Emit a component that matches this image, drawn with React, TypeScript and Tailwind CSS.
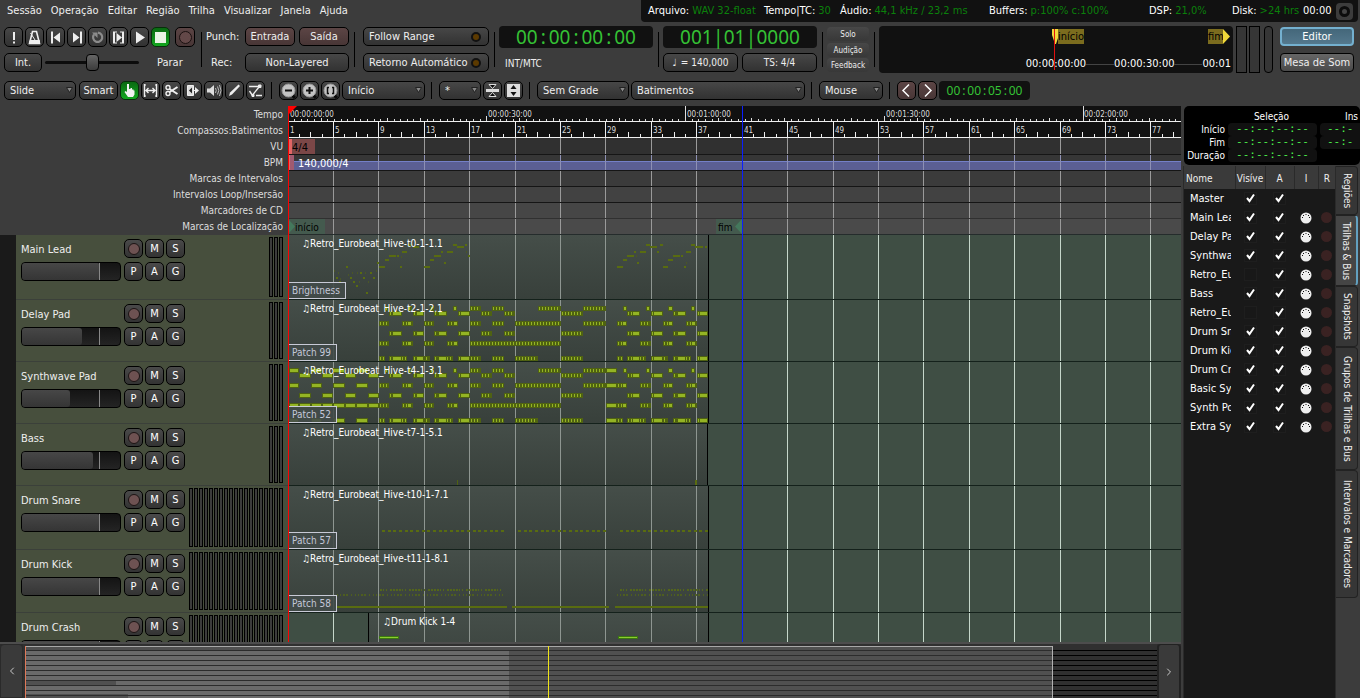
import React, { useState } from 'react';
import { ChevronLeft, ChevronRight } from 'lucide-react';
import clsx from 'clsx';

const GRID_LINES = Array.from({ length: 20 }, (_, i) => Math.floor(i * 45.42));

const MENUS = ['Sessão', 'Operação', 'Editar', 'Região', 'Trilha', 'Visualizar', 'Janela', 'Ajuda'];

const btn = 'border border-black rounded-[5px] bg-gradient-to-b from-[#474747] to-[#323232] flex items-center justify-center shrink-0 whitespace-nowrap';
const btnRed = 'border border-black rounded-[5px] bg-gradient-to-b from-[#5c4545] to-[#483636] flex items-center justify-center shrink-0';
const btnGreen = 'border border-[#06300a] rounded-[5px] bg-gradient-to-b from-[#0a6a12] to-[#12a81f] flex items-center justify-center shrink-0';

const Sep = () => <div className="w-px h-[35px] bg-black ml-[5px] mr-1 self-center shrink-0" />;
const ToolSep = () => <div className="w-px h-[17px] bg-black ml-[6px] mr-[7px] self-center shrink-0" />;

const Icon = ({ children }: { children: React.ReactNode }) => (
  <svg width="17" height="17" viewBox="0 0 17 17" fill="none" stroke="#eee" strokeWidth="1" aria-hidden="true">
    {children}
  </svg>
);

interface ClockProps {
  value: string;
  small?: boolean;
}

// digits keep their own width, separators get a full cell
const Clock = ({ value, small }: ClockProps) => (
  <span className={clsx('font-["Noto_Sans"] text-[#35c235] whitespace-nowrap', small ? 'text-[12px] leading-[18px]' : 'text-[19px] leading-[22px]')}>
    {value.split(/([:|])/).map((part, i) => (
      <span key={i} className={clsx('inline-block text-center', i % 2 === 1 && (small ? 'w-[7px]' : 'w-[11px]'))}>{part}</span>
    ))}
  </span>
);

interface StatusItemProps {
  label: string;
  value: string;
  className: string;
}

const StatusItem = ({ label, value, className }: StatusItemProps) => (
  <div className={clsx('shrink-0 flex gap-[3px] whitespace-nowrap', className)}>
    <span>{label}</span>
    <span className="text-[#0b800b]">{value}</span>
  </div>
);

const MenuBar = () => (
  <header className="flex h-[22px] items-center">
    <nav className="flex gap-[9px] pl-[7px] h-full items-center">
      {MENUS.map((m) => (
        <button key={m}>{m}</button>
      ))}
    </nav>
    <div className="ml-auto mr-[2px] h-full bg-[#111] rounded-b-[4px] pl-[7px] pr-[5px] flex items-center w-[717px] shrink-0 text-white">
      <StatusItem label="Arquivo:" value="WAV 32-float" className="w-[116px]" />
      <StatusItem label="Tempo|TC:" value="30" className="w-[76px]" />
      <StatusItem label="Áudio:" value="44,1 kHz / 23,2 ms" className="w-[149px]" />
      <StatusItem label="Buffers:" value="p:100% c:100%" className="w-[160px]" />
      <StatusItem label="DSP:" value="21,0%" className="w-[83px]" />
      <StatusItem label="Disk:" value=">24 hrs" className="w-[71px]" />
      <span className="w-[33px] shrink-0">00:00</span>
      <button aria-label="Erros" className="size-[17px] shrink-0 rounded-[4px] bg-[#3c3c3c] flex items-center justify-center">
        <span className="size-[11px] rounded-full border-[3px] border-[#0c0c0c] bg-[#444]" />
      </button>
    </div>
  </header>
);

const TRANSPORT = [
  { name: 'Pânico', icon: <path d="M8 3h2v8h-2zM8 12.500h2v2h-2z" fill="#eee" stroke="none" /> },
  { name: 'Metrônomo', icon: <><path d="M6.500 2.500h4l3 12h-10z" strokeWidth="1.600" /><path d="M4 11.500h9.500v3h-10zM9 11L4.500 4" fill="#eee" /></> },
  { name: 'Ir ao início', icon: <path d="M4 2.500h2v12h-2zM13 3.500v10l-6.500-5z" fill="#eee" stroke="none" /> },
  { name: 'Ir ao fim', icon: <path d="M12 2.500h2v12h-2zM5 3.500v10l6.500-5z" fill="#eee" stroke="none" /> },
  { name: 'Loop', icon: <><path d="M5 5.500a4.600 4.600 0 1 0 4-1.800" stroke="#8c8c8c" strokeWidth="2.200" /><path d="M3 3.500h5.500v5.500z" fill="#8c8c8c" stroke="none" /></> },
  { name: 'Tocar intervalo', icon: <><path d="M3 2.500h2v12H3zM12 2.500h2v12h-2zM6.500 4v9l5.500-4.500z" fill="#eee" stroke="none" /><path d="M5 3h2M5 14h2M10 3h2M10 14h2" /></> },
  { name: 'Tocar', icon: <path d="M5 2.500v12l9-6z" fill="#eee" stroke="none" /> },
];

const Transport = () => {
  const [shuttle, setShuttle] = useState(50);

  return (
    <section className="mt-1 h-[47px] flex pl-1 pr-[6px]">
      <div className="w-[192px] shrink-0 flex flex-col justify-between py-px">
        <div className="flex gap-[2px]">
          {TRANSPORT.map((t) => (
            <button key={t.name} aria-label={t.name} className={clsx(btn, 'w-[19px] h-[20px]')}>
              <Icon>{t.icon}</Icon>
            </button>
          ))}
          <button aria-label="Parar" className={clsx(btnGreen, 'w-[19px] h-[20px]')}>
            <span className="size-[11px] bg-[#e8f4e4]" />
          </button>
          <button aria-label="Gravar" className={clsx(btnRed, 'w-[20px] h-[20px] ml-[3px]')}>
            <span className="size-[13px] rounded-full border border-[#1a1010] bg-[#634848]" />
          </button>
        </div>
        <div className="flex items-center h-[19px]">
          <button className={clsx(btn, 'w-[38px] h-[19px]')}>Int.</button>
          <div className="relative w-[94px] h-[19px] ml-[3px] flex items-center">
            <div className="h-[3px] w-full bg-[#0c0c0c] rounded-full" />
            <div
              className="absolute top-px w-[13px] h-[17px] -ml-[6px] rounded-[4px] border border-black bg-gradient-to-b from-[#666] to-[#3c3c3c]"
              style={{ left: `${shuttle}%` }}
            />
            <input
              type="range"
              aria-label="Shuttle"
              value={shuttle}
              onChange={(e) => setShuttle(Number(e.target.value))}
              className="absolute inset-0 w-full h-full opacity-0"
            />
          </div>
          <span className="ml-[18px]">Parar</span>
        </div>
      </div>
      <Sep />
      <div className="shrink-0 flex flex-col justify-between py-px">
        <div className="flex items-center gap-1">
          <span className="w-[35px] leading-[16px]">Punch:</span>
          <button className={clsx(btnRed, 'w-[50px] h-[19px]')}>Entrada</button>
          <button className={clsx(btnRed, 'w-[50px] h-[19px]')}>Saída</button>
        </div>
        <div className="flex items-center gap-1">
          <span className="w-[35px] pl-[5px] leading-[16px]">Rec:</span>
          <button className={clsx(btn, 'w-[104px] h-[19px]')}>Non-Layered</button>
        </div>
      </div>
      <Sep />
      <div className="shrink-0 flex flex-col justify-between py-px ml-1 w-[126px]">
        {['Follow Range', 'Retorno Automático'].map((t) => (
          <button key={t} className="border border-black rounded-[5px] bg-gradient-to-b from-[#474747] to-[#323232] h-[19px] flex items-center justify-between pl-[5px] pr-[7px] whitespace-nowrap">
            {t}
            <span className="size-[10px] rounded-full border-2 border-[#111] bg-[#5c3a00]" />
          </button>
        ))}
      </div>
      <Sep />
      <div className="shrink-0 w-[154px] flex flex-col justify-between">
        <div className="h-[22px] bg-[#111] rounded-[4px] flex items-center justify-center"><Clock value="00:00:00:00" /></div>
        <span className="text-[10px] leading-[18px] pl-[6px]">INT/MTC</span>
      </div>
      <Sep />
      <div className="shrink-0 w-[154px] flex flex-col justify-between pb-px">
        <div className="h-[22px] bg-[#111] rounded-[4px] flex items-center justify-center"><Clock value="001|01|0000" /></div>
        <div className="flex gap-1">
          <button className={clsx(btn, 'w-[75px] h-[19px] text-[10px] gap-1')}>
            <span>♩</span>
            <span>= 140,000</span>
          </button>
          <button className={clsx(btn, 'w-[75px] h-[19px] text-[10px]')}>TS: 4/4</button>
        </div>
      </div>
      <Sep />
      <div className="shrink-0 w-[42px] flex flex-col justify-between py-px text-[8px] leading-[12px]">
        {['Solo', 'Audição', 'Feedback'].map((t) => (
          <button key={t} className="h-[14px] pt-[2px] rounded-[4px] bg-gradient-to-b from-[#474747] to-[#383838]">{t}</button>
        ))}
      </div>
      <Sep />
      <div className="relative flex-1 min-w-0 bg-[#111] rounded-[4px] flex flex-col justify-between pt-[3px] pb-px overflow-hidden">
        <div className="flex justify-end h-[15px] leading-[15px] text-black">
          <div className="flex">
            <svg width="7" height="15" aria-hidden="true"><path d="M0 0h7v6l-3 9h-1l-3-9z" fill="#f0d83a" /></svg>
            <span className="bg-[#7b6c1e] w-[26px] -ml-px">início</span>
          </div>
          <div className="flex ml-[124px] mr-[3px]">
            <span className="bg-[#7b6c1e] w-[15px]">fim</span>
            <svg width="7" height="15" aria-hidden="true"><path d="M0 0l7 7.500l-7 7.500z" fill="#f0d83a" /></svg>
          </div>
        </div>
        <div className="flex justify-end items-center leading-[16px] text-white pr-[2px]">
          <span>00:00:00:00</span>
          <span className="w-[28px] h-px bg-[#444]" />
          <span>00:00:30:00</span>
          <span className="w-[28px] h-px bg-[#444]" />
          <span>00:01</span>
        </div>
        <div className="absolute right-[178px] top-[3px] w-px h-[41px] bg-[#e01010]" />
      </div>
      <div className="flex shrink-0 ml-[3px] gap-[2px]">
        <div className="w-[11px] border border-black bg-[#363636]" />
        <div className="w-[11px] border border-black bg-[#363636]" />
        <div className="w-[9px] border border-black bg-[#363636] rounded-[4px] ml-[2px]" />
      </div>
      <div className="shrink-0 w-[74px] ml-[7px] flex flex-col justify-between py-px">
        <button className="h-[19px] rounded-[4px] border-2 border-[#74b0cf] bg-gradient-to-b from-[#44677a] to-[#54788d] flex items-center justify-center text-white">Editor</button>
        <button className="h-[19px] rounded-[4px] border border-black bg-gradient-to-b from-[#666] to-[#4a4a4a] flex items-center justify-center whitespace-nowrap">Mesa de Som</button>
      </div>
    </section>
  );
};

interface DropProps {
  label: string;
  value: string;
  className: string;
}

const Drop = ({ label, value, className }: DropProps) => (
  <div className={clsx('relative h-[19px] shrink-0', className)}>
    <select aria-label={label} className="appearance-none w-full h-full border border-black rounded-[5px] bg-gradient-to-b from-[#474747] to-[#323232] pl-[5px]">
      <option>{value}</option>
    </select>
    <svg width="7" height="6" className="absolute right-[3px] top-[6px] pointer-events-none" aria-hidden="true">
      <path d="M.5.500h6l-3 5z" fill="#888" stroke="#222" />
    </svg>
  </div>
);

const TOOLS = [
  { name: 'Intervalo', icon: <><path d="M2.500 2v13M14.500 2v13M4 8.500h9M6.500 6L4 8.500L6.500 11M10.500 6L13 8.500L10.500 11" strokeWidth="1.400" /><path d="M2 3h2M2 14h2M13 3h2M13 14h2" /></> },
  { name: 'Cortar', icon: <><circle cx="5" cy="5.500" r="2" strokeWidth="1.400" /><circle cx="5" cy="11.500" r="2" strokeWidth="1.400" /><path d="M6.500 7L9 8.500L14.500 12M6.500 10L9 8.500L14.500 5" strokeWidth="2" /></> },
  { name: 'Esticar', icon: <><path d="M3.500 3.500h6v10h-6z" fill="#ddd" /><path d="M5 8.500l3-3v6z" fill="#222" stroke="none" /><path d="M11 5l4 3.500l-4 3.500z" fill="#eee" stroke="none" /><path d="M10 8.500h3" /></> },
  { name: 'Audição', icon: <><path d="M2 6.500h3l4-3.500v11l-4-3.500h-3z" fill="#ddd" stroke="none" /><path d="M10.500 6q1.500 2.500 0 5M12.500 4.500q2.500 4 0 8M14.500 3q3 5.500 0 11" stroke="#bbb" /></> },
  { name: 'Desenhar', icon: <path d="M3 14l1-3.500l8.500-8l1.500 1.500l-8 8.500z" fill="#eee" stroke="none" /> },
  { name: 'Editar', icon: <><path d="M2 4.500h5M9 13.500h6M6 12.500L12 5" strokeWidth="1.400" /><path d="M2.500 9l3 4.500M7 4.500h4" strokeWidth="1.400" /><path d="M11.500 3h2.500v2.500h-2.500zM5 12.500h2v2H5z" fill="#eee" /></> },
];

const Lens = ({ name, children }: { name: string; children: React.ReactNode }) => (
  <button aria-label={name} className={clsx(btn, 'w-[19px] h-[19px]')}>
    <Icon>
      <path d="M11 12l4 4" stroke="#0a0a0a" strokeWidth="3" />
      <circle cx="8.500" cy="8.500" r="6.500" fill="#c4c4c4" stroke="#999" />
      <g stroke="#111">{children}</g>
    </Icon>
  </button>
);

const Toolbar = () => (
  <section className="mt-2 h-[19px] flex pl-1">
    <Drop label="Modo de edição" value="Slide" className="w-[72px]" />
    <button className={clsx(btn, 'w-[39px] ml-[3px]')}>Smart</button>
    <div className="flex gap-[2px] ml-[2px]">
      <button aria-label="Objeto" className={clsx(btnGreen, 'w-[19px]')}>
        <Icon><path d="M6 2h2v5h1.500v-1h1.500v1.500h1.500v1h1v4l-1.500 2.500h-5L3.500 10l1-1l1.500 1z" fill="#f2f2f2" stroke="none" /></Icon>
      </button>
      {TOOLS.map((t) => (
        <button key={t.name} aria-label={t.name} className={clsx(btn, 'w-[19px]')}>
          <Icon>{t.icon}</Icon>
        </button>
      ))}
    </div>
    <ToolSep />
    <div className="flex gap-[2px]">
      <Lens name="Menos zoom"><path d="M5 8.500h7" strokeWidth="2" /></Lens>
      <Lens name="Mais zoom"><path d="M5 8.500h7M8.500 5v7" strokeWidth="2" /></Lens>
      <Lens name="Zoom na sessão"><path d="M7 5.500H5.500v6H7M10 5.500h1.500v6H10" strokeWidth="1.500" /></Lens>
      <Drop label="Foco do zoom" value="Início" className="w-[83px]" />
    </div>
    <ToolSep />
    <div className="flex gap-[2px]">
      <Drop label="Altura das trilhas" value=" * " className="w-[42px]" />
      <button aria-label="Encolher trilhas" className={clsx(btn, 'w-[19px]')}>
        <Icon><path d="M2 7h13v3H2z" fill="#ddd" stroke="none" /><path d="M5 2.500h7l-3.500 4zM5 14.500h7l-3.500-4z" fill="#0a0a0a" stroke="#ddd" /></Icon>
      </button>
      <button aria-label="Expandir trilhas" className={clsx(btn, 'w-[19px]')}>
        <Icon><path d="M2 2h13v13H2z" fill="#ddd" stroke="none" /><path d="M5.500 7h6l-3-4zM5.500 10h6l-3 4z" fill="#111" stroke="none" /></Icon>
      </button>
    </div>
    <ToolSep />
    <div className="flex gap-[2px]">
      <Drop label="Grade" value="Sem Grade" className="w-[92px]" />
      <Drop label="Unidade da grade" value="Batimentos" className="w-[174px]" />
    </div>
    <ToolSep />
    <Drop label="Ponto de edição" value="Mouse" className="w-[64px]" />
    <ToolSep />
    <div className="flex gap-[2px]">
      <button aria-label="Recuar" className={clsx(btnRed, 'w-[19px]')}><Icon><path d="M11 2.500l-6 6l6 6" stroke="#fff" strokeWidth="1.500" /></Icon></button>
      <button aria-label="Avançar" className={clsx(btnRed, 'w-[19px]')}><Icon><path d="M6 2.500l6 6l-6 6" stroke="#fff" strokeWidth="1.500" /></Icon></button>
      <div className="w-[91px] bg-[#111] rounded-[4px] flex items-center justify-center"><Clock value="00:00:05:00" small /></div>
    </div>
  </section>
);

const GridLines = ({ color }: { color: string }) => (
  <svg className="absolute inset-0 w-full h-full" aria-hidden="true">
    {GRID_LINES.slice(1).map((x) => (
      <rect key={x} x={x} y="0" width="1" height="100%" fill={color} />
    ))}
  </svg>
);

const RULERS = [
  { label: 'Tempo', row: 'h-[16px] bg-[#111] border-[#eee]' },
  { label: 'Compassos:Batimentos', row: 'h-[16px] bg-[#111] border-[#eee]' },
  { label: 'VU', row: 'h-[17px] bg-[#303030] border-[#151515]' },
  { label: 'BPM', row: 'h-[16px] bg-[#363636] border-[#151515]' },
  { label: 'Marcas de Intervalos', row: 'h-[16px] bg-[#3b3b3b] border-[#151515]' },
  { label: 'Intervalos Loop/Insersão', row: 'h-[16px] bg-[#424242] border-[#151515]' },
  { label: 'Marcadores de CD', row: 'h-[16px] bg-[#464646] border-[#303030]' },
  { label: 'Marcas de Localização', row: 'h-[16px] bg-[#4a4a4a] border-[#252c2c]' },
];

const TimeRuler = () => (
  <>
    <svg className="absolute inset-0 w-full h-full" aria-hidden="true">
      {Array.from({ length: 135 }, (_, i) => {
        const h = i % 60 === 0 ? 15 : i % 30 === 0 ? 5 : i % 5 === 0 ? 3 : 2;
        return <rect key={i} x={Math.floor(i * 6.625)} y={15 - h} width="1" height={h} fill="#ddd" />;
      })}
    </svg>
    {[0, 1, 2, 3, 4].map((n) => (
      <span key={n} className="absolute top-[3px] text-[8px] leading-[11px] text-[#ddd]" style={{ left: Math.floor(n * 198.7) + 2 }}>
        {`00:0${Math.floor(n / 2)}:${n % 2 ? '30' : '00'}:00`}
      </span>
    ))}
  </>
);

const BarRuler = () => (
  <>
    <svg className="absolute inset-0 w-full h-full" aria-hidden="true">
      {Array.from({ length: 79 }, (_, i) => {
        const h = i % 4 === 0 ? 15 : i % 2 === 0 ? 5 : 3;
        return <rect key={i} x={Math.floor(i * 11.355)} y={15 - h} width="1" height={h} fill="#eee" />;
      })}
    </svg>
    {GRID_LINES.map((x, i) => (
      <span key={x} className="absolute top-[3px] text-[8px] leading-[11px] text-[#ddd]" style={{ left: x + 2 }}>{i * 4 + 1}</span>
    ))}
  </>
);

const RulerContent = ({ index }: { index: number }) => {
  if (index === 0) return <TimeRuler />;
  if (index === 1) return <BarRuler />;
  return (
    <>
      {index === 3 && <div className="absolute inset-x-0 top-[6px] bottom-0 bg-[#5b5f93] border-t border-[#7480c8]" />}
      <GridLines color={index === 3 ? '#8d90b4' : '#9a9a9a'} />
      {index === 2 && <span className="absolute left-0 top-px w-[27px] h-[15px] bg-[#7b4747] border-l-4 border-[#e06565] text-[11px] leading-[17px] text-black">4/4</span>}
      {index === 3 && (
        <>
          <span className="absolute left-0 top-0 w-[6px] h-full bg-[#a05a70] border-l-2 border-[#e06565]" />
          <span className="absolute left-[10px] top-0 text-[11px] leading-[17px] text-white">140,000/4</span>
        </>
      )}
      {index === 7 && (
        <>
          <div className="absolute left-0 top-0 w-[37px] h-full bg-[#445a4e] flex text-[10px] text-black leading-[18px]">
            <svg width="7" height="15" className="shrink-0" aria-hidden="true"><path d="M0 0l7 7.500l-7 7.500z" fill="#44785c" /></svg>
            início
          </div>
          <div className="absolute left-[428px] top-0 w-[26px] h-full bg-[#445a4e] flex justify-between pl-[2px] text-[10px] text-black leading-[18px]">
            fim
            <svg width="7" height="15" className="shrink-0" aria-hidden="true"><path d="M7 0l-7 7.500l7 7.500z" fill="#44785c" /></svg>
          </div>
        </>
      )}
    </>
  );
};

// [start, end, held start, held end]
type Note = [number, number, number?, number?];

const LONG: Note[] = [[101, 114, 105, 113], [125, 136, 129, 135], [146, 159, 151, 158], [170, 182, 173, 181], [193, 204], [216, 227], [273, 295], [339, 352, 345, 351], [363, 375, 366, 374], [385, 398, 390, 397], [409, 420, 412, 419]];
const HEAD: Note[] = [[91, 101], [114, 125, 120, 123], [136, 146], [159, 170, 166, 169]];
const TAIL: Note[] = [[329, 339, 335, 338], [352, 363], [375, 385, 381, 384], [398, 409, 404, 407]];

const PAD_NOTES: { y: number; notes: Note[] }[] = [
  { y: 6, notes: [[97, 101], [120, 124], [142, 146], [165, 169, 166, 168], [182, 193], [204, 216], [250, 273], [295, 318], [335, 339, 336, 338], [358, 362, 359, 361], [380, 385, 381, 384], [403, 407, 404, 406]] },
  { y: 11, notes: LONG },
  { y: 21, notes: [...HEAD, [182, 193], [204, 216], [227, 273], [295, 318], ...TAIL] },
  { y: 31, notes: LONG },
  { y: 41, notes: [...HEAD, [182, 273], ...TAIL] },
  { y: 56, notes: [[91, 97], [101, 119, 105, 113], [125, 142, 129, 135], [146, 165, 151, 158], [170, 193, 173, 181], [204, 216], [227, 250], [273, 295], [329, 335], [339, 358, 345, 351], [363, 380, 366, 374], [385, 403, 390, 397], [409, 420, 412, 419]] },
];

const EVEN = [[1, 11], [23, 34], [45, 57], [68, 80]];
const ODD = [[11, 23], [34, 45], [57, 68], [80, 91]];
const held = (list: number[][]): Note[] => list.map(([a, b]) => [a, b, a + 1, b - 1]);
const BREAK: Note = [318, 329, 319, 328];

const SYNTH_NOTES = PAD_NOTES.map(({ y, notes }, i) => ({
  y,
  notes: [
    ...held(i === 4 ? [...EVEN, ...ODD] : i % 2 === 1 && i !== 5 ? ODD : EVEN),
    ...notes,
    ...(i === 0 || i === 2 || i === 4 || i === 5 ? [BREAK] : []),
  ],
}));

const PadNotes = ({ rows }: { rows: { y: number; notes: Note[] }[] }) => (
  <>
    {rows.map(({ y, notes }) =>
      notes.map(([a, b, h0, h1]) => {
        const stripes: number[] = [];
        for (let x = a + 1; x < b - 1; x += 3) {
          if (h0 === undefined || h1 === undefined || x < h0 - 1 || x > h1) stripes.push(x);
        }
        return (
          <g key={`${y}-${a}`}>
            <rect x={a} y={y} width={b - a} height="5" fill="#4f6212" />
            {h0 !== undefined && h1 !== undefined && <rect x={h0} y={y + 1} width={h1 - h0} height="3" fill="#94b424" />}
            {stripes.map((x) => (
              <rect key={x} x={x} y={y + 1} width="1" height="3" fill="#94b424" />
            ))}
          </g>
        );
      })
    )}
  </>
);

// [x, y, width]
const LEAD_NOTES = [
  [48, 43, 2], [51, 47, 2], [58, 32, 2], [62, 43, 2], [65, 47, 2], [68, 51, 2], [72, 38, 2], [75, 43, 2], [78, 58, 2], [82, 38, 2], [85, 43, 2], [89, 28, 2],
  [91, 32, 6], [97, 25, 4], [101, 21, 7], [109, 21, 2], [112, 32, 2], [114, 17, 5], [120, 10, 4], [125, 12, 6], [136, 32, 6], [142, 25, 4], [146, 21, 7], [153, 17, 2],
  [156, 28, 2], [159, 17, 6], [165, 10, 4], [169, 12, 7], [177, 10, 2], [180, 21, 2],
  [329, 32, 6], [335, 25, 4], [339, 21, 7], [346, 17, 2], [349, 28, 2], [352, 17, 6], [358, 10, 4], [362, 12, 7], [369, 17, 2], [372, 10, 3],
  [375, 32, 5], [380, 25, 5], [385, 21, 7], [393, 21, 2], [396, 32, 2], [398, 17, 5], [403, 10, 4], [407, 12, 8], [417, 12, 2],
];
const LEAD_GHOSTS = [[46, 36], [50, 38], [52, 44], [60, 40], [64, 38], [69, 38], [77, 38], [71, 47], [80, 47], [88, 36], [113, 22], [178, 17], [348, 21], [398, 28]];

const HATS = '2 1 1 2 1 3 2 1 2 1 2 1';

interface TrackData {
  name: string;
  height: string;
  fill: number;
  meters: number;
  region: string;
  regionWidth: string;
  patch?: string;
  notes: React.ReactNode;
}

const TRACKS: TrackData[] = [
  {
    name: 'Main Lead', height: 'h-[65px]', fill: 79, meters: 3, region: 'Retro_Eurobeat_Hive-t0-1-1.1', regionWidth: 'w-[421px]', patch: 'Brightness',
    notes: (
      <>
        {LEAD_NOTES.map(([x, y, w], i) => <rect key={i} x={x} y={y - 1} width={w} height="2" fill="#596c10" />)}
        {LEAD_GHOSTS.map(([x, y], i) => <rect key={i} x={x} y={y - 1} width="1" height="2" fill="#4a5626" />)}
      </>
    ),
  },
  { name: 'Delay Pad', height: 'h-[62px]', fill: 61, meters: 3, region: 'Retro_Eurobeat_Hive-t2-1-2.1', regionWidth: 'w-[421px]', patch: 'Patch 99', notes: <PadNotes rows={PAD_NOTES} /> },
  { name: 'Synthwave Pad', height: 'h-[62px]', fill: 49, meters: 3, region: 'Retro_Eurobeat_Hive-t4-1-3.1', regionWidth: 'w-[421px]', patch: 'Patch 52', notes: <PadNotes rows={SYNTH_NOTES} /> },
  {
    name: 'Bass', height: 'h-[62px]', fill: 72, meters: 3, region: 'Retro_Eurobeat_Hive-t7-1-5.1', regionWidth: 'w-[420px]',
    notes: <><rect x="169" y="56" width="1" height="5" fill="#4f6212" /><rect x="407" y="56" width="2" height="5" fill="#596c10" /></>,
  },
  {
    name: 'Drum Snare', height: 'h-[64px]', fill: 79, meters: 19, region: 'Retro_Eurobeat_Hive-t10-1-7.1', regionWidth: 'w-[421px]', patch: 'Patch 57',
    notes: <path d="M94 45h122M230 45h88M332 45h88" stroke="#596c10" strokeWidth="2" strokeDasharray="3 3 3 2 3 3" />,
  },
  {
    name: 'Drum Kick', height: 'h-[63px]', fill: 79, meters: 19, region: 'Retro_Eurobeat_Hive-t11-1-8.1', regionWidth: 'w-[421px]', patch: 'Patch 58',
    notes: (
      <>
        <path d="M92 40h124M332 40h88" stroke="#54661a" strokeWidth="2" strokeDasharray={HATS} />
        <path d="M49 45h166M329 45h91" stroke="#4e5e20" strokeWidth="2" strokeDasharray="1 2 1 2 2 1 2 3 1 3" />
        <path d="M49 57h170M224 57h97M327 57h93" stroke="#596c10" strokeWidth="2" />
      </>
    ),
  },
];

const CRASH: TrackData = {
  name: 'Drum Crash', height: 'h-[65px]', fill: 79, meters: 19, region: 'Drum Kick 1-4', regionWidth: 'w-[341px]',
  notes: (
    <>
      <path d="M10 24.500h20M249 24.500h20" stroke="#3c7a10" strokeWidth="3" />
      <path d="M11 24.500h18M250 24.500h18" stroke="#8ccc30" strokeWidth="1" />
    </>
  ),
};

const stripBtn = 'size-[19px] border border-black rounded-[5px] bg-gradient-to-b from-[#4a4a4a] to-[#333] flex items-center justify-center text-white';

const TrackHeader = ({ track }: { track: TrackData }) => {
  const [gain, setGain] = useState(track.fill);

  return (
    <div className={clsx('flex bg-[#474f3d] border-b border-[#3b403a] ml-4 px-[5px]', track.height)}>
      <div className="w-[100px] pt-1 shrink-0">
        <h3 className="h-[19px] leading-[21px] text-[#eee] whitespace-nowrap">{track.name}</h3>
        <div className="relative mt-1 h-[19px] rounded-[4px] border border-black bg-gradient-to-b from-[#141414] to-[#242424] overflow-hidden">
          <div className="h-full rounded-r-[3px] bg-gradient-to-b from-[#474747] to-[#353535]" style={{ width: gain - 1 }} />
          <div className="absolute left-[77px] top-0 w-px h-full bg-[#888]" />
          <input
            type="range"
            aria-label={`Ganho ${track.name}`}
            value={gain}
            onChange={(e) => setGain(Number(e.target.value))}
            className="absolute inset-0 w-full h-full opacity-0"
          />
        </div>
      </div>
      <div className="grid grid-cols-3 gap-x-[2px] gap-y-1 pt-1 pl-[3px] content-start shrink-0">
        <button className={stripBtn} aria-label={`Gravar ${track.name}`}>
          <span className="size-[12px] rounded-full border border-[#1c1414] bg-[#6e5252]" />
        </button>
        {['M', 'S', 'P', 'A', 'G'].map((l) => (
          <button key={l} className={stripBtn}>{l}</button>
        ))}
      </div>
      <div className="ml-auto flex gap-px py-[2px]">
        {Array.from({ length: track.meters }, (_, i) => (
          <div key={i} className="w-1 border border-black bg-[#3c3c3c]" />
        ))}
      </div>
    </div>
  );
};

const TrackLane = ({ track, offset = false }: { track: TrackData; offset?: boolean }) => (
  <div className={clsx('relative flex bg-[#3f4e44] border-b border-[#14211b]', track.height)}>
    <GridLines color="#c5d6ca" />
    {offset && <div className="w-[80px] shrink-0" />}
    <div className={clsx('relative shrink-0 border-r border-black bg-gradient-to-b from-[#454e49] to-[#38403b] overflow-hidden', track.regionWidth, offset && 'border-l')}>
      <svg className="absolute inset-0 w-full h-full" aria-hidden="true">
        {GRID_LINES.slice(1, 11).map((x) => (
          <rect key={x} x={offset ? x - 81 : x} y="0" width="1" height="100%" fill="#8e9691" />
        ))}
        {track.notes}
      </svg>
      <span className="absolute left-[14px] top-[3px] text-[10px] leading-[12px] text-white whitespace-nowrap">♫{track.region}</span>
      {track.patch && (
        <span className="absolute left-0 bottom-0 h-[17px] pl-1 pr-[5px] border border-[#c8cad6] border-l-0 bg-[#424b49]/90 text-[10px] leading-[16px] text-[#c4c8d8]">{track.patch}</span>
      )}
    </div>
  </div>
);

const Editor = () => (
  <div className="flex-1 min-h-0 flex overflow-hidden">
    <div className="w-[288px] shrink-0">
      <div className="h-[129px] pt-px pr-[5px] text-right text-[10px] leading-[16px] text-[#ddd]">
        {RULERS.map((r) => (
          <div key={r.label}>{r.label}</div>
        ))}
      </div>
      <div className="bg-[#1a1a1a]">
        {[...TRACKS, CRASH].map((t) => (
          <TrackHeader key={t.name} track={t} />
        ))}
      </div>
    </div>
    <div className="relative flex-1 min-w-0 overflow-hidden">
      {RULERS.map((r, i) => (
        <div key={r.label} className={clsx('relative border-b overflow-hidden', r.row)}>
          <RulerContent index={i} />
        </div>
      ))}
      {TRACKS.map((t) => (
        <TrackLane key={t.name} track={t} />
      ))}
      <TrackLane track={CRASH} offset />
      <div className="absolute left-0 inset-y-0 w-px bg-[#f00]" />
      <svg width="9" height="9" className="absolute left-0 top-0" aria-hidden="true"><path d="M0 0h9l-9 9z" fill="#f00" /></svg>
      <div className="absolute left-[454px] inset-y-0 w-px bg-[#0a1eff]" />
    </div>
  </div>
);

const Summary = () => (
  <div className="h-[56px] shrink-0 flex border-t-2 border-[#4d4d4d] bg-[#2c2c2c]">
    <button aria-label="Rolar à esquerda" className="w-[23px] shrink-0 bg-[#3a3a3a] border border-[#2a2a2a] rounded-t-[4px] flex items-center justify-center">
      <ChevronLeft size={12} color="#ccc" />
    </button>
    <svg className="flex-1 min-w-0 h-full bg-[#303030]" aria-hidden="true">
      <rect x="2" y="2" width="1028" height="54" fill="#505050" />
      <rect x="3" y="7" width="483" height="49" fill="#6a6a6a" />
      <rect x="3" y="36" width="90" height="5" fill="#505050" />
      <rect x="3" y="50" width="102" height="4" fill="#505050" />
      {Array.from({ length: 10 }, (_, i) => (
        <g key={i}>
          <rect x="3" y={6 + i * 5} width="1026" height="1" fill="#2c2c2c" />
          <rect x="1030" y={6 + i * 5} width="100%" height="1" fill="#000" />
        </g>
      ))}
      <rect x="2" y="2" width="1028" height="1" fill="#a8a8a8" />
      <rect x="1029" y="2" width="1" height="54" fill="#b0b0b0" />
      <rect x="2" y="2" width="1" height="54" fill="#e07858" />
      <rect x="525" y="2" width="1" height="54" fill="#f0e418" />
    </svg>
    <button aria-label="Rolar à direita" className="w-[24px] shrink-0 bg-[#3a3a3a] border-x-2 border-t border-[#222] rounded-t-[4px] flex items-center justify-center">
      <ChevronRight size={12} color="#ccc" />
    </button>
  </div>
);

const LIST = [
  { name: 'Master', visible: true, midi: false },
  { name: 'Main Lead', visible: true, midi: true },
  { name: 'Delay Pad', visible: true, midi: true },
  { name: 'Synthwave Pad', visible: true, midi: true },
  { name: 'Retro_Eurobeat', visible: false, midi: true },
  { name: 'Bass', visible: true, midi: true },
  { name: 'Retro_Eurobeat', visible: false, midi: true },
  { name: 'Drum Snare', visible: true, midi: true },
  { name: 'Drum Kick', visible: true, midi: true },
  { name: 'Drum Crash', visible: true, midi: true },
  { name: 'Basic Synth', visible: true, midi: true },
  { name: 'Synth Pop', visible: true, midi: true },
  { name: 'Extra Synth', visible: true, midi: true },
];

const Check = ({ label, on }: { label: string; on: boolean }) => (
  <span className="relative block size-[13px] mx-auto">
    <input type="checkbox" aria-label={label} defaultChecked={on} className="peer appearance-none block size-[13px] border border-[#1e1e1e] bg-[#181818]" />
    <svg width="13" height="13" className="absolute inset-0 pointer-events-none opacity-0 peer-checked:opacity-100" fill="none" aria-hidden="true">
      <path d="M3 6l2.500 3L10 2.500" stroke="#fff" strokeWidth="2" />
    </svg>
  </span>
);

const SelectionClock = () => (
  <div className="h-[59px] shrink-0 bg-black rounded-[5px] ml-px overflow-hidden text-[10px] leading-[13px] text-white pt-[4px]">
    <div className="flex">
      <span className="w-[43px] shrink-0" />
      <span className="w-[89px] shrink-0 text-center">Seleção</span>
      <span className="ml-[29px]">Ins</span>
    </div>
    {['Início', 'Fim', 'Duração'].map((label) => (
      <div key={label} className="flex h-[13px]">
        <span className="w-[41px] shrink-0 text-right">{label}</span>
        <span className="ml-[3px] w-[89px] shrink-0 rounded-[4px] bg-[#111] text-center font-['DejaVu_Sans_Mono'] text-[11px] leading-[12px] text-[#4cf04c]">--:--:--:--</span>
        {label !== 'Duração' && <span className="ml-[3px] pl-[7px] flex-1 rounded-l-[4px] bg-[#111] font-['DejaVu_Sans_Mono'] text-[11px] leading-[12px] text-[#4cf04c] whitespace-nowrap">--:-</span>}
      </div>
    ))}
  </div>
);

const TABS = [
  { name: 'Regiões', size: 'h-[49px]' },
  { name: 'Trilhas & Bus', size: 'h-[71px]' },
  { name: 'Snapshots', size: 'h-[61px]' },
  { name: 'Grupos de Trilhas e Bus', size: 'h-[123px]' },
  { name: 'Intervalos e Marcadores', size: 'h-[128px]' },
];

const SidePanel = () => {
  const [tab, setTab] = useState('Trilhas & Bus');

  return (
    <aside className="w-[177px] shrink-0 flex flex-col">
      <SelectionClock />
      <div className="flex-1 min-h-0 flex mt-px">
        <div className="flex-1 min-w-0 bg-[#191919] border-x border-[#2a2a2a]">
          <table className="table-fixed w-full border-collapse">
            <thead>
              <tr className="h-[23px] bg-[#3a3a3a] text-[10px]">
                <th className="w-[51px] font-normal text-left p-0 pt-[2px] pl-[2px]">Nome</th>
                <th className="w-[30px] font-normal p-0 pt-[2px] border-l border-[#2a2a2a] overflow-hidden">Visíve</th>
                <th className="w-[29px] font-normal p-0 pt-[2px] border-l border-[#2a2a2a]">A</th>
                <th className="w-[24px] font-normal p-0 pt-[2px] border-l border-[#2a2a2a]">I</th>
                <th className="font-normal p-0 pt-[2px] border-l border-[#2a2a2a]">R</th>
              </tr>
            </thead>
            <tbody>
              {LIST.map((t, i) => (
                <tr key={i} className="h-[19px]">
                  <td className="p-0 text-white">
                    <div className="ml-[6px] w-[41px] overflow-hidden whitespace-nowrap">{t.name}</div>
                  </td>
                  <td className="p-0"><Check label={`${t.name} visível`} on={t.visible} /></td>
                  <td className="p-0"><Check label={`${t.name} ativo`} on /></td>
                  <td className="p-0">
                    {t.midi && (
                      <svg width="12" height="12" className="mx-auto block" aria-hidden="true">
                        <circle cx="6" cy="6" r="5.500" fill="#eee" />
                        <path d="M2 5h1v1H2zM3 3h1v1H3zM5.500 2h1v1h-1zM8 3h1v1H8zM9 5h1v1H9z" fill="#111" />
                      </svg>
                    )}
                  </td>
                  <td className="p-0">{t.midi && <span className="block size-[11px] mx-auto rounded-full bg-[#3a2222]" />}</td>
                </tr>
              ))}
            </tbody>
          </table>
        </div>
        <div role="tablist" className="w-[24px] shrink-0 flex flex-col items-start">
          {TABS.map((t) => (
            <button
              key={t.name}
              role="tab"
              aria-selected={tab === t.name}
              onClick={() => setTab(t.name)}
              className={clsx(
                'w-[22px] border border-l-0 border-[#222] rounded-r-[4px] [writing-mode:vertical-rl] text-[10px] leading-[18px] text-center whitespace-nowrap shrink-0',
                t.size,
                tab === t.name ? 'bg-[#454545] border-r-2 border-r-[#62a0c0]' : 'bg-[#363636]'
              )}
            >
              {t.name}
            </button>
          ))}
        </div>
      </div>
    </aside>
  );
};

export default function App() {
  return (
    <div className="h-screen flex flex-col overflow-hidden bg-[#3c3c3c] text-[#eee] text-[11px] leading-[14px] font-['DejaVu_Sans_Condensed','Noto_Sans',sans-serif]">
      <MenuBar />
      <Transport />
      <Toolbar />
      <main className="flex-1 min-h-0 flex mt-[6px]">
        <div className="flex-1 min-w-0 flex flex-col mr-[2px]">
          <Editor />
          <Summary />
        </div>
        <SidePanel />
      </main>
    </div>
  );
}
